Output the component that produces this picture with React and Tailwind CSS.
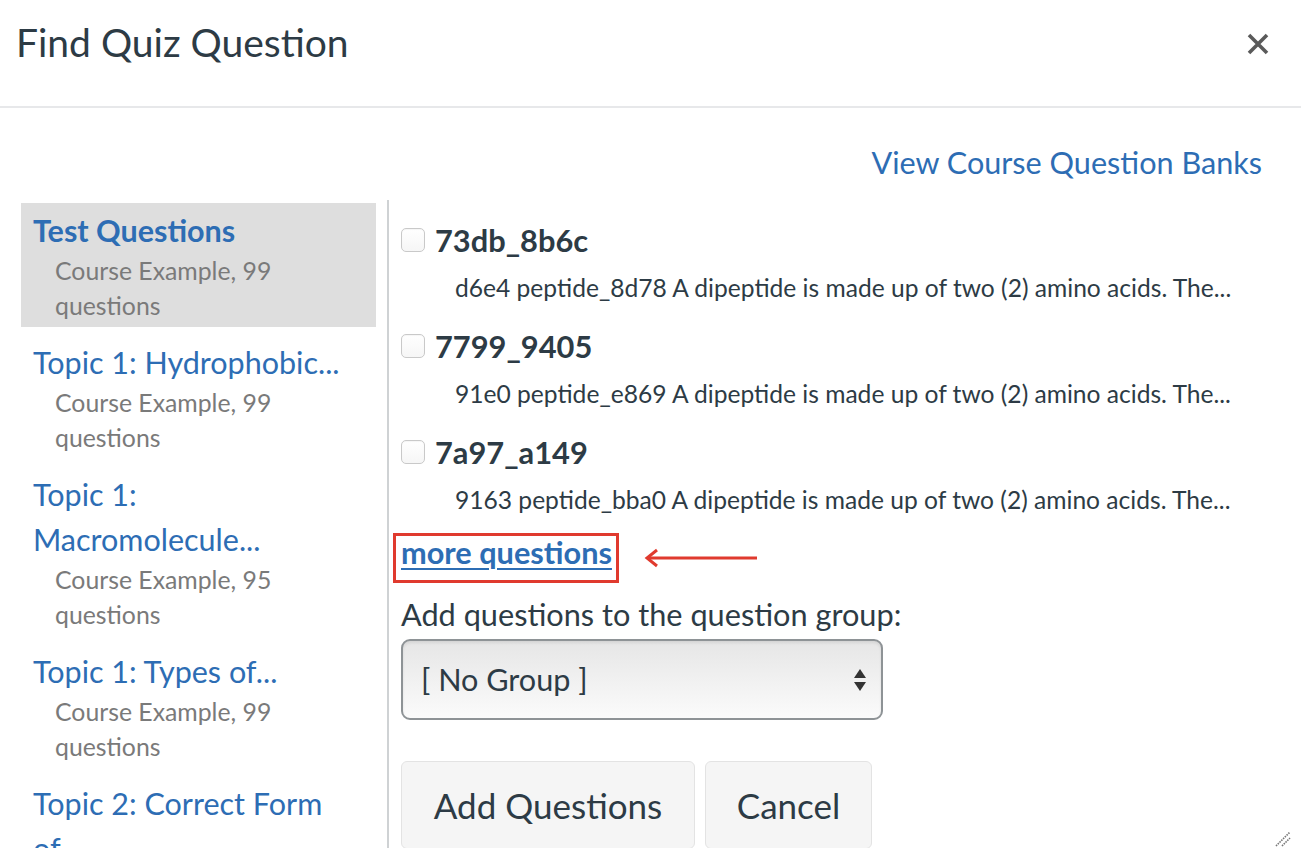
import React from 'react';

const banks = [
    { title: ['Test Questions'], sub: ['Course Example, 99', 'questions'], active: true },
    { title: ['Topic 1: Hydrophobic...'], sub: ['Course Example, 99', 'questions'] },
    { title: ['Topic 1:', 'Macromolecule...'], sub: ['Course Example, 95', 'questions'] },
    { title: ['Topic 1: Types of...'], sub: ['Course Example, 99', 'questions'] },
    { title: ['Topic 2: Correct Form', 'of'], sub: ['Course Example, 99', 'questions'] },
];

const questions = [
    { name: '73db_8b6c', text: 'd6e4 peptide_8d78 A dipeptide is made up of two (2) amino acids. The...' },
    { name: '7799_9405', text: '91e0 peptide_e869 A dipeptide is made up of two (2) amino acids. The...' },
    { name: '7a97_a149', text: '9163 peptide_bba0 A dipeptide is made up of two (2) amino acids. The...' },
];

const App = () => {
    return (
        <div
            className="relative w-[1301px] h-[861px] bg-white overflow-hidden text-[#2d3b45]"
            style={{ fontFamily: 'Lato, "Open Sans", sans-serif' }}
        >
            {/* header */}
            <div className="h-[108px] border-b-2 border-[#e7e8ea] flex items-start justify-between pl-[16px] pr-[32px] pt-[19px]">
                <h1 className="text-[39px] leading-[46px] font-normal">Find Quiz Question</h1>
                <button className="mt-[14px] text-[#555]" aria-label="Close">
                    <svg width="22" height="22" viewBox="0 0 22 22">
                        <path d="M2 2 L20 20 M20 2 L2 20" stroke="#5a5a5a" strokeWidth="3.6" strokeLinecap="butt" />
                    </svg>
                </button>
            </div>

            {/* body */}
            <div className="h-[740px] overflow-hidden">
                <div className="flex justify-end pr-[39px] mt-[38px]">
                    <a className="text-[30.6px] leading-[34px] text-[#2d6db4]">View Course Question Banks</a>
                </div>

                <div className="flex pl-[21px] mt-[23px] h-[645px]">
                    {/* bank list */}
                    <div className="w-[355px] flex-shrink-0 flex flex-col gap-[8px]">
                        {banks.map((bank) => (
                            <div
                                key={bank.title.join(' ')}
                                className={`px-[12px] pt-[5px] pb-[4px] ${bank.active ? 'bg-[#dedede]' : ''}`}
                            >
                                <p className={`text-[30.5px] leading-[45px] text-[#2d6db4] ${bank.active ? 'font-bold' : ''}`}>
                                    {bank.title.map((line, i) => (
                                        <span key={line} className="block">{line}</span>
                                    ))}
                                </p>
                                <div className="pl-[22px] text-[24.8px] leading-[35px] text-[#7a7a7a]">
                                    {bank.sub.map((line) => (
                                        <p key={line}>{line}</p>
                                    ))}
                                </div>
                            </div>
                        ))}
                    </div>

                    {/* questions */}
                    <div className="ml-[11px] -mt-[3px] border-l-2 border-[#cfd2d4] pl-[12px] pt-[23px] flex-1">
                        <div className="flex flex-col gap-[26px]">
                            {questions.map((q) => (
                                <div key={q.name}>
                                    <label className="flex items-center gap-[10px]">
                                        <span className="w-[24px] h-[24px] -mt-[3px] rounded-[5px] border border-[#c9c9c9] bg-gradient-to-b from-white to-[#f6f6f6] shadow-[inset_0_1px_1px_rgba(0,0,0,0.04)]"></span>
                                        <span className="text-[30.8px] leading-[36px] font-bold">{q.name}</span>
                                    </label>
                                    <p className="mt-[14px] pl-[54px] text-[24.6px] leading-[30px]">{q.text}</p>
                                </div>
                            ))}
                        </div>

                        <div className="relative mt-[20px] h-[36px] flex items-center">
                            <a className="text-[30.7px] leading-[36px] font-bold text-[#2d6db4] underline underline-offset-[4px] decoration-[2px]">
                                more questions
                            </a>
                            {/* annotation */}
                            <span className="absolute left-[-8px] top-[-2px] w-[226px] h-[50px] border-[3px] border-[#e03a2e]"></span>
                            <svg className="absolute left-[242px] top-[12px]" width="116" height="22" viewBox="0 0 116 22">
                                <path d="M114 11 L6 11" stroke="#e03a2e" strokeWidth="3" />
                                <path d="M14 3 L4 11 L14 19" stroke="#e03a2e" strokeWidth="3" fill="none" />
                            </svg>
                        </div>

                        <p className="mt-[29px] text-[30.7px] leading-[30px]">Add questions to the question group:</p>

                        <div className="mt-[9px] w-[482px] h-[81px] rounded-[9px] border-2 border-[#8e9396] bg-gradient-to-b from-[#e6e6e6] to-[#fbfbfb] shadow-[inset_0_2px_3px_rgba(0,0,0,0.08)] flex items-center justify-between pl-[18px] pr-[14px]">
                            <span className="text-[30.6px] leading-[32px]">[ No Group ]</span>
                            <svg width="14" height="24" viewBox="0 0 14 24">
                                <path d="M7 1 L13 10 L1 10 Z" fill="#333" />
                                <path d="M1 14 L13 14 L7 23 Z" fill="#333" />
                            </svg>
                        </div>

                        <div className="mt-[41px] flex gap-[10px]">
                            <button className="w-[294px] h-[88px] rounded-[6px] border border-[#e3e3e3] bg-[#f5f5f5] text-[35px]">
                                Add Questions
                            </button>
                            <button className="w-[167px] h-[88px] rounded-[6px] border border-[#e3e3e3] bg-[#f5f5f5] text-[35px]">
                                Cancel
                            </button>
                        </div>
                    </div>
                </div>
            </div>

            {/* resize grip */}
            <svg className="absolute left-[1274px] top-[830px]" width="18" height="18" viewBox="0 0 18 18">
                <path d="M2 16 L16 2 M8 16 L16 8" stroke="#777" strokeWidth="1.6" strokeDasharray="1.5 1" />
            </svg>
        </div>
    );
};

export default App;
